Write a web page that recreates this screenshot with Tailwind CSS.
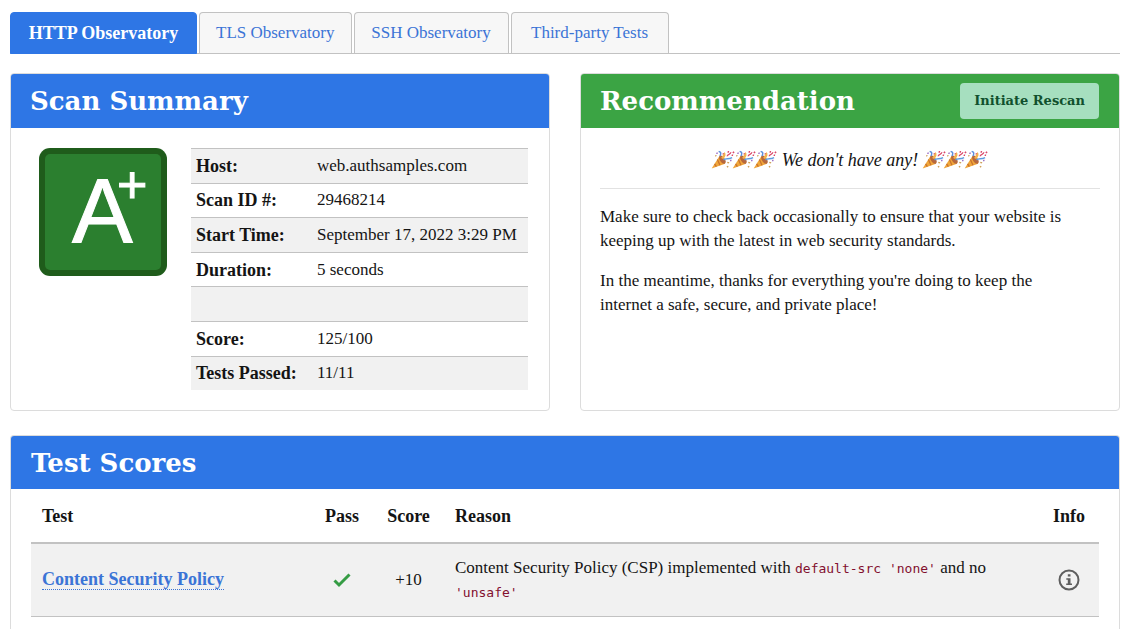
<!DOCTYPE html>
<html lang="en">
<head>
<meta charset="utf-8">
<meta name="viewport" content="width=device-width, initial-scale=1">
<title>HTTP Observatory</title>
<script src="https://cdn.jsdelivr.net/npm/@tailwindcss/browser@4"></script>
</head>
<body class="flex min-h-screen flex-col bg-white pt-3 pr-[13px] pl-[10px] font-['Liberation_Serif',serif] text-[17px] leading-6 text-[#141414]">
<svg class="hidden" aria-hidden="true">
  <symbol id="popper" viewBox="0 0 22 20">
    <path d="M.5 19 6 5.500C9 6.500 13 10.500 13.500 14Z" fill="#f0a63a"/>
    <path d="M4.500 9.500 8.500 15.500M2.500 14 5 17" stroke="#c9732f" stroke-width="1.300"/>
    <ellipse cx="9.800" cy="9.700" rx="5.200" ry="2.300" transform="rotate(48 9.800 9.700)" fill="#b8683c"/>
    <path d="M8 8C9.500 6 9 3.500 10.500 1.500 12.500 4 12.500 6 10.500 9Z" fill="#f2b34d"/>
    <path d="M11 10c2-2.500 4.500 0 8.500-2.500" fill="none" stroke="#5d9be0" stroke-width="1.700"/>
    <path d="M4 1c3 .5 3 2.500 2.500 5" fill="none" stroke="#5b8fdc" stroke-width="1.500"/>
    <path d="M14 6c0-2.500 3-1.500 3-4" fill="none" stroke="#d9486a" stroke-width="1.500"/>
    <path d="M13.500 1.500h1.500M19 1.500l1.500 1M18.500 5h1.500M9 3l.5 1" stroke="#d9486a" stroke-width="1.600"/>
    <path d="M15.500 12.500l2 .5M16 16.500l1.500 1M1.500 5l1 1" stroke="#d0a25c" stroke-width="1.400"/>
    <path d="M2 3h1.500M18 10.500h1.500" stroke="#9a6bc4" stroke-width="1.500"/>
  </symbol>
</svg>

<nav class="flex gap-[2px] border-b border-[#c2c2c2]" aria-label="Scanners">
  <a href="#http" aria-current="page" class="-mb-px min-w-[187px] rounded-t border border-[#2e76e5] bg-[#2e76e5] px-4 py-2 text-center text-[18px] leading-6 font-bold text-white">HTTP Observatory</a>
  <a href="#tls" class="rounded-t border border-b-0 border-[#c2c2c2] bg-[#f7f7f7] px-4 py-2 text-[#3b74d6]">TLS Observatory</a>
  <a href="#ssh" class="min-w-[155px] rounded-t border border-b-0 border-[#c2c2c2] bg-[#f7f7f7] px-4 py-2 text-center text-[#3b74d6]">SSH Observatory</a>
  <a href="#third" class="min-w-[158px] rounded-t border border-b-0 border-[#c2c2c2] bg-[#f7f7f7] px-4 py-2 text-center text-[#3b74d6]">Third-party Tests</a>
</nav>

<main class="mt-[19px] flex flex-1 flex-col gap-6">
  <div class="grid grid-cols-2 gap-[30px]">
    <section class="rounded border border-[#dcdcdc]">
      <h2 class="flex h-[54px] items-center rounded-t-[3px] bg-[#2e76e5] px-[19px] font-['DejaVu_Serif',serif] text-[26px] font-bold text-white">Scan Summary</h2>
      <div class="flex gap-6 pt-5 pr-[21px] pb-5 pl-7">
        <svg class="size-32 shrink-0" viewBox="0 0 128 128" role="img" aria-label="Grade A plus">
          <rect width="128" height="128" rx="11" fill="#1f5c1b"/>
          <rect x="6" y="6" width="116" height="116" rx="5" fill="#2b7f2f"/>
          <text x="33" y="94" font-size="91" fill="#fff" stroke="#fff" font-family="Liberation Sans, sans-serif">A<tspan x="78" y="55" font-size="52">+</tspan></text>
        </svg>
        <table class="h-[242px] flex-1 border-collapse text-left">
          <tbody>
            <tr class="border-t border-[#c2c2c2] bg-[#f1f1f1]"><th scope="row" class="w-[121px] pl-[5px] text-[18px]">Host:</th><td class="pl-[5px]">web.authsamples.com</td></tr>
            <tr class="border-t border-[#c2c2c2]"><th scope="row" class="pl-[5px] text-[18px]">Scan ID #:</th><td class="pl-[5px]">29468214</td></tr>
            <tr class="border-t border-[#c2c2c2] bg-[#f1f1f1]"><th scope="row" class="pl-[5px] text-[18px]">Start Time:</th><td class="pl-[5px] whitespace-nowrap">September 17, 2022 3:29 PM</td></tr>
            <tr class="border-t border-[#c2c2c2]"><th scope="row" class="pl-[5px] text-[18px]">Duration:</th><td class="pl-[5px]">5 seconds</td></tr>
            <tr class="border-t border-[#c2c2c2] bg-[#f1f1f1]"><td colspan="2">&nbsp;</td></tr>
            <tr class="border-t border-[#c2c2c2]"><th scope="row" class="pl-[5px] text-[18px]">Score:</th><td class="pl-[5px]">125/100</td></tr>
            <tr class="border-t border-[#c2c2c2] bg-[#f1f1f1]"><th scope="row" class="pl-[5px] text-[18px]">Tests Passed:</th><td class="pl-[5px]">11/11</td></tr>
          </tbody>
        </table>
      </div>
    </section>

    <section class="rounded border border-[#dcdcdc]">
      <div class="flex h-[54px] items-center justify-between rounded-t-[3px] bg-[#3ba444] pr-5 pl-[19px]">
        <h2 class="font-['DejaVu_Serif',serif] text-[26px] font-bold text-white">Recommendation</h2>
        <button type="button" class="h-9 rounded bg-[#a6dfbf] px-[14px] font-['DejaVu_Serif',serif] text-[13px] font-bold text-[#10502d]">Initiate Rescan</button>
      </div>
      <div class="px-[19px] pt-5">
        <p class="flex items-center justify-center gap-[6px] border-b border-[#e2e2e2] pb-4 text-[18px] leading-6 italic">
          <span class="flex -skew-x-12" role="img" aria-label="Party poppers"><svg class="h-5 w-[21px]"><use href="#popper"/></svg><svg class="h-5 w-[21px]"><use href="#popper"/></svg><svg class="h-5 w-[21px]"><use href="#popper"/></svg></span>
          We don't have any!
          <span class="flex -skew-x-12" role="img" aria-label="Party poppers"><svg class="h-5 w-[21px]"><use href="#popper"/></svg><svg class="h-5 w-[21px]"><use href="#popper"/></svg><svg class="h-5 w-[21px]"><use href="#popper"/></svg></span>
        </p>
        <p class="mt-4 pr-3">Make sure to check back occasionally to ensure that your website is keeping up with the latest in web security standards.</p>
        <p class="mt-4 pr-3">In the meantime, thanks for everything you're doing to keep the internet a safe, secure, and private place!</p>
      </div>
    </section>
  </div>

  <section class="flex-1 rounded-t border border-b-0 border-[#dcdcdc]">
    <h2 class="flex h-[53px] items-center rounded-t-[3px] bg-[#2e76e5] px-5 font-['DejaVu_Serif',serif] text-[26px] font-bold text-white">Test Scores</h2>
    <div class="px-5">
      <table class="w-full table-fixed border-collapse text-left">
        <thead>
          <tr class="h-[54px] border-b-2 border-[#c2c2c2] text-[18px] leading-6">
            <th scope="col" class="w-[280px] pl-[11px]">Test</th>
            <th scope="col" class="w-[62px] text-center">Pass</th>
            <th scope="col" class="w-[71px] text-center">Score</th>
            <th scope="col" class="pl-[11px]">Reason</th>
            <th scope="col" class="w-[60px] text-center">Info</th>
          </tr>
        </thead>
        <tbody>
          <tr class="h-[73px] border-b border-[#c2c2c2] bg-[#f1f1f1]">
            <td class="pl-[11px]"><a href="#csp" class="border-b border-dotted border-[#3b74d6] text-[18px] leading-6 font-bold text-[#3b74d6]">Content Security Policy</a></td>
            <td><svg class="mx-auto h-4 w-[18px]" viewBox="0 0 18 16" role="img" aria-label="Passed"><path d="M1.500 8.500 6 13 16.500 2.500" fill="none" stroke="#359c44" stroke-width="3"/></svg></td>
            <td class="text-center">+10</td>
            <td class="pl-[11px]">Content Security Policy (CSP) implemented with <code class="font-['DejaVu_Sans_Mono',monospace] text-[13px] leading-4 text-[#83102f]">default-src 'none'</code> and no <code class="font-['DejaVu_Sans_Mono',monospace] text-[13px] leading-4 text-[#83102f]">'unsafe'</code></td>
            <td><button type="button" aria-label="More information" class="mx-auto block"><svg class="size-[22px]" viewBox="0 0 22 22" fill="none"><circle cx="11" cy="11" r="9.500" stroke="#5e5e5e" stroke-width="2"/><path d="M9.800 5.200h2.700v2.300H9.800zM8.300 9.200h4.200v5.200H14V16H8.200v-1.600h1.600v-3.600H8.300z" fill="#5e5e5e"/></svg></button></td>
          </tr>
        </tbody>
      </table>
    </div>
  </section>
</main>
</body>
</html>
